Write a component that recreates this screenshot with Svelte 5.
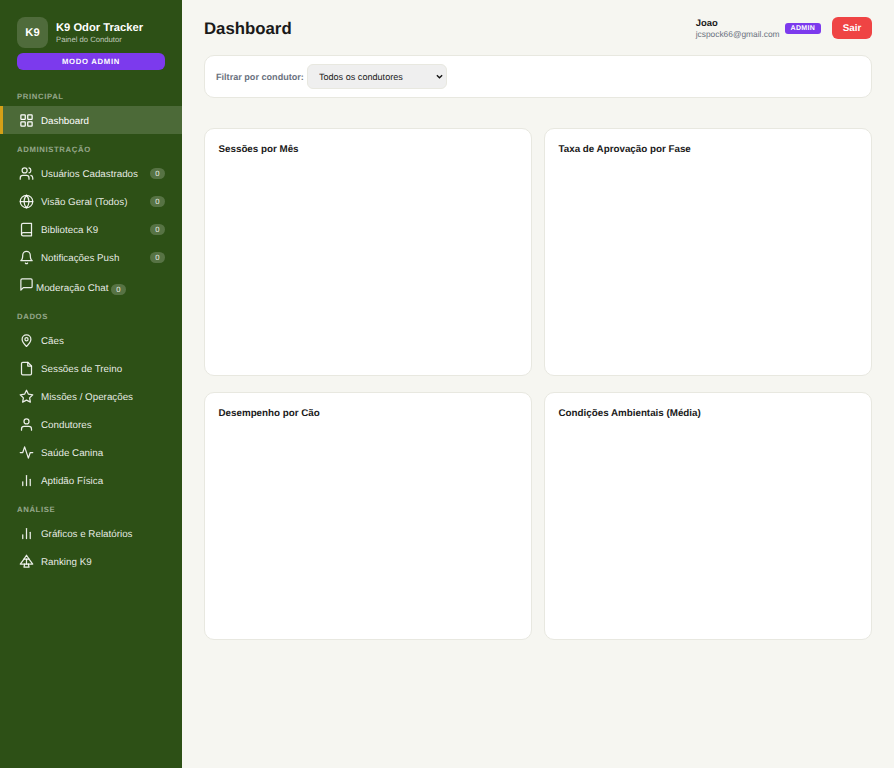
<script>
  const icons = {
    grid: '<rect x="3" y="3" width="7" height="7" rx="1"/><rect x="14" y="3" width="7" height="7" rx="1"/><rect x="14" y="14" width="7" height="7" rx="1"/><rect x="3" y="14" width="7" height="7" rx="1"/>',
    users: '<path d="M16 21v-2a4 4 0 0 0-4-4H6a4 4 0 0 0-4 4v2"/><circle cx="9" cy="7" r="4"/><path d="M22 21v-2a4 4 0 0 0-3-3.87"/><path d="M16 3.13a4 4 0 0 1 0 7.75"/>',
    globe: '<circle cx="12" cy="12" r="10"/><path d="M2 12h20"/><path d="M12 2a15.3 15.3 0 0 1 4 10 15.3 15.3 0 0 1-4 10 15.3 15.3 0 0 1-4-10 15.3 15.3 0 0 1 4-10z"/>',
    book: '<path d="M4 19.5A2.5 2.5 0 0 1 6.5 17H20"/><path d="M6.5 2H20v20H6.5A2.5 2.5 0 0 1 4 19.5v-15A2.5 2.5 0 0 1 6.5 2z"/>',
    bell: '<path d="M18 8A6 6 0 0 0 6 8c0 7-3 9-3 9h18s-3-2-3-9"/><path d="M13.73 21a2 2 0 0 1-3.46 0"/>',
    chat: '<path d="M21 15a2 2 0 0 1-2 2H7l-4 4V5a2 2 0 0 1 2-2h14a2 2 0 0 1 2 2z"/>',
    pin: '<path d="M19 10c0 5-7 11.5-7 11.5S5 15 5 10a7 7 0 0 1 14 0z"/><circle cx="12" cy="10" r="2.5"/>',
    file: '<path d="M14 2H6a2 2 0 0 0-2 2v16a2 2 0 0 0 2 2h12a2 2 0 0 0 2-2V8z"/><path d="M14 2v6h6"/>',
    star: '<polygon points="12 2 15.09 8.26 22 9.27 17 14.14 18.18 21.02 12 17.77 5.82 21.02 7 14.14 2 9.27 8.91 8.26 12 2"/>',
    user: '<path d="M20 21v-2a4 4 0 0 0-4-4H8a4 4 0 0 0-4 4v2"/><circle cx="12" cy="7" r="4"/>',
    activity: '<polyline points="22 12 18 12 15 21 9 3 6 12 2 12"/>',
    bars: '<line x1="18" y1="20" x2="18" y2="10"/><line x1="12" y1="20" x2="12" y2="4"/><line x1="6" y1="20" x2="6" y2="14"/>',
    tree: '<path d="M12 2 8 8h8z"/><path d="M8 8l-6 8h20l-6-8"/><path d="M9 16l-1 5h8l-1-5"/><path d="M12 8v8"/>'
  };
  const sections = [
    { title: 'Principal', items: [{ label: 'Dashboard', icon: 'grid', active: true }] },
    { title: 'Administração', items: [
      { label: 'Usuários Cadastrados', icon: 'users', badge: 0 },
      { label: 'Visão Geral (Todos)', icon: 'globe', badge: 0 },
      { label: 'Biblioteca K9', icon: 'book', badge: 0 },
      { label: 'Notificações Push', icon: 'bell', badge: 0 },
      { label: 'Moderação Chat', icon: 'chat', badge: 0, odd: true }
    ] },
    { title: 'Dados', items: [
      { label: 'Cães', icon: 'pin' },
      { label: 'Sessões de Treino', icon: 'file' },
      { label: 'Missões / Operações', icon: 'star' },
      { label: 'Condutores', icon: 'user' },
      { label: 'Saúde Canina', icon: 'activity' },
      { label: 'Aptidão Física', icon: 'bars' }
    ] },
    { title: 'Análise', items: [
      { label: 'Gráficos e Relatórios', icon: 'bars' },
      { label: 'Ranking K9', icon: 'tree' }
    ] }
  ];
  const charts = ['Sessões por Mês', 'Taxa de Aprovação por Fase', 'Desempenho por Cão', 'Condições Ambientais (Média)'];
</script>

<div class="layout">
  <aside class="sidebar">
    <div class="brand">
      <div class="logo">K9</div>
      <div class="brand-text">
        <div class="brand-name">K9 Odor Tracker</div>
        <div class="brand-sub">Painel do Condutor</div>
      </div>
    </div>
    <div class="mode">MODO ADMIN</div>
    {#each sections as s}
      <div class="section-title">{s.title}</div>
      {#each s.items as it}
        <div class="item" class:active={it.active} class:odd={it.odd}>
          <svg class="icon" viewBox="0 0 24 24" fill="none" stroke="currentColor" stroke-width="2" stroke-linecap="round" stroke-linejoin="round">{@html icons[it.icon]}</svg>
          <span class="label">{it.label}</span>
          {#if it.badge !== undefined}<span class="badge">{it.badge}</span>{/if}
        </div>
      {/each}
    {/each}
  </aside>
  <main class="main">
    <header class="top">
      <h1>Dashboard</h1>
      <div class="user">
        <div class="who">
          <div class="name">Joao</div>
          <div class="email">jcspock66@gmail.com</div>
        </div>
        <span class="tag">ADMIN</span>
        <button class="logout">Sair</button>
      </div>
    </header>
    <div class="filter">
      <label for="cond">Filtrar por condutor:</label>
      <select id="cond"><option>Todos os condutores</option></select>
    </div>
    <div class="grid">
      {#each charts as c}
        <section class="card"><h3>{c}</h3></section>
      {/each}
    </div>
  </main>
</div>

<style>
  :global(body) { margin: 0; background: #f6f6f1; font-family: "Liberation Sans", Arial, sans-serif; text-rendering: geometricPrecision; }
  .layout { display: flex; min-height: 768px; }
  .sidebar { width: 182px; flex: none; box-sizing: border-box; background: #2d5016; color: #fff; padding-top: 17px; }
  .brand { display: flex; align-items: center; gap: 8px; padding: 0 17px; }
  .logo { width: 31px; height: 31px; border-radius: 8px; background: #4f6b3b; display: flex; align-items: center; justify-content: center; font-weight: 700; font-size: 11.2px; }
  .brand-name { font-size: 11.2px; font-weight: 700; line-height: 14px; }
  .brand-sub { font-size: 7.7px; line-height: 9px; color: rgba(255,255,255,.7); }
  .mode { margin: 5px 17px 11px; height: 17px; line-height: 17px; border-radius: 6px; background: #7c3aed; text-align: center; font-size: 7.7px; font-weight: 700; letter-spacing: .7px; }
  .section-title { margin: 0 17px; padding: 9px 0 2px; height: 14px; line-height: 14px; font-size: 7.7px; font-weight: 700; letter-spacing: .65px; text-transform: uppercase; color: rgba(255,255,255,.5); }
  .item { display: flex; align-items: center; height: 28px; padding: 0 17px 0 18.5px; font-size: 9.8px; color: rgba(255,255,255,.9); gap: 7.5px; }
  .item .icon { width: 15px; height: 15px; flex: none; }
  .item .label { flex: 1; white-space: nowrap; padding-top: 2px; }
  .item.active { background: rgba(255,255,255,.15); border-left: 3px solid #d4a017; padding-left: 15.5px; color: #fff; }
  .badge { background: rgba(255,255,255,.2); border-radius: 8px; padding: 0 5px; font-size: 7.7px; line-height: 11px; min-width: 5px; text-align: center; }
  .item.odd { gap: 2.5px; height: 30px; align-items: flex-start; padding-top: 10px; box-sizing: border-box; }
  .item.odd .icon { margin-top: -4px; }
  .item.odd .label { flex: none; line-height: 14px; padding-top: 1px; }
  .item.odd .badge { margin: 3px 0 0 0; }
  .main { flex: 1; min-width: 0; padding: 17px 22px 0; box-sizing: border-box; }
  .top { display: flex; justify-content: space-between; align-items: center; height: 22px; }
  h1 { margin: 0; padding-top: 2px; font-size: 16.8px; font-weight: 700; color: #1a1a1a; }
  .user { display: flex; align-items: center; }
  .who { padding-top: 1px; }
  .name { font-size: 9.45px; font-weight: 700; color: #1a1a1a; line-height: 11px; }
  .email { font-size: 8.4px; line-height: 11px; color: #6b7280; }
  .tag { margin-left: 5px; background: #7c3aed; color: #fff; font-size: 7px; font-weight: 700; padding: 1px 6px; border-radius: 3px; letter-spacing: .3px; line-height: 9px; }
  .logout { margin-left: 11px; width: 40px; height: 22px; padding: 0; border: 0; border-radius: 6px; background: #ef4444; color: #fff; font: 700 9.8px "Liberation Sans", Arial, sans-serif; text-rendering: geometricPrecision; }
  .filter { margin-top: 16px; height: 43px; box-sizing: border-box; display: flex; align-items: center; gap: 3px; padding: 0 11px; background: #fff; border: 1px solid #e8e8e0; border-radius: 10px; }
  .filter label { font-size: 9.1px; font-weight: 700; color: #6b7280; }
  select { appearance: none; width: 140px; height: 25px; border: 1px solid #e8e8e0; border-radius: 6px; background: #efefef url("data:image/svg+xml,%3Csvg xmlns='http://www.w3.org/2000/svg' viewBox='0 0 8 5'%3E%3Cpath d='M1 1l3 3 3-3' fill='none' stroke='%23111' stroke-width='1.5'/%3E%3C/svg%3E") no-repeat right 3px center / 7px 5px; font: 9.1px "Liberation Sans", Arial, sans-serif; text-rendering: geometricPrecision; padding: 0 0 0 11px; color: #1a1a1a; }
  .grid { margin-top: 30px; display: grid; grid-template-columns: 1fr 1fr; gap: 16px 12px; }
  .card { height: 248px; box-sizing: border-box; background: #fff; border: 1px solid #e8e8e0; border-radius: 10px; padding: 14px 13.5px; }
  h3 { margin: 0; font-size: 9.8px; line-height: 13px; font-weight: 700; color: #1a1a1a; }
</style>
